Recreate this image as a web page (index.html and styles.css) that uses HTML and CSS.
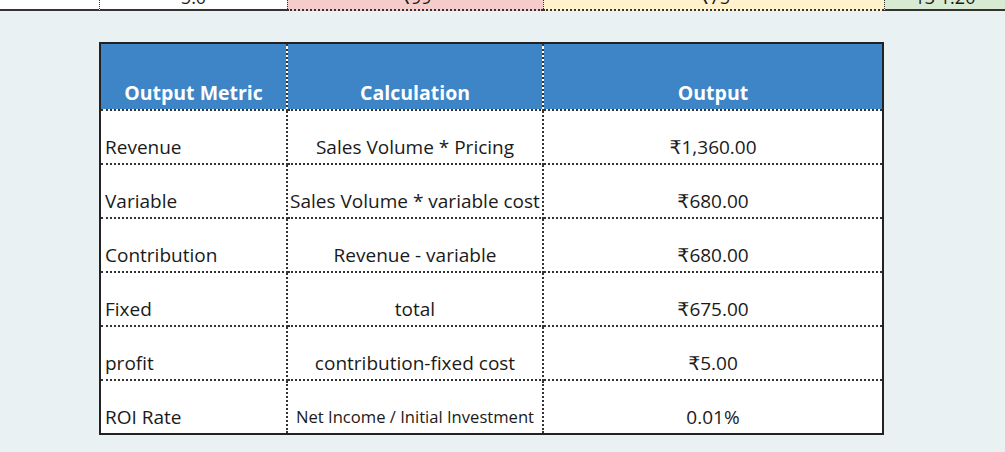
FILE: index.html
```html
<!DOCTYPE html>
<html>
<head>
<meta charset="utf-8">
<link rel="stylesheet" href="styles.css">
</head>
<body>
<div class="strip">
  <div class="s s-a"></div>
  <div class="s s-b"><span>5.0</span></div>
  <div class="s s-c"><span>₹99</span></div>
  <div class="s s-d"><span>₹75</span></div>
  <div class="s s-e"><span>13 1.20</span></div>
</div>
<div class="wrap">
<table class="metrics">
  <thead>
    <tr><th class="c1">Output Metric</th><th class="c2">Calculation</th><th class="c3">Output</th></tr>
  </thead>
  <tbody>
    <tr><td class="c1">Revenue</td><td class="c2">Sales Volume * Pricing</td><td class="c3">₹1,360.00</td></tr>
    <tr><td class="c1">Variable</td><td class="c2">Sales Volume * variable cost</td><td class="c3">₹680.00</td></tr>
    <tr><td class="c1">Contribution</td><td class="c2">Revenue - variable</td><td class="c3">₹680.00</td></tr>
    <tr><td class="c1">Fixed</td><td class="c2">total</td><td class="c3">₹675.00</td></tr>
    <tr><td class="c1">profit</td><td class="c2">contribution-fixed cost</td><td class="c3">₹5.00</td></tr>
    <tr><td class="c1">ROI Rate</td><td class="c2 small">Net Income / Initial Investment</td><td class="c3">0.01%</td></tr>
  </tbody>
</table>
</div>
</body>
</html>
```
FILE: styles.css
```css
html, body {
  margin: 0;
  padding: 0;
  background: #e9f1f3;
  font-family: "Open Sans", "DejaVu Sans", sans-serif;
  color: #1a1a1a;
}
.strip {
  display: flex;
  height: 11px;
  overflow: hidden;
}
.s {
  height: 9px;
  overflow: hidden;
  font-size: 18px;
  text-align: center;
  line-height: 10px;
}
.s span { position: relative; top: -8px; }
.s-a { width: 99px; background: #fff; border-bottom: 2px solid #333; border-right: 1px dotted #333; }
.s-b { width: 187px; background: #fff; border-bottom: 2px solid #333; }
.s-c { width: 255px; background: #f4cccc; border-bottom: 2px dotted #333; border-left: 1px dotted #333; }
.s-d { width: 340px; background: #fff2cc; border-bottom: 2px dotted #333; border-left: 1px dotted #333; }
.s-e { flex: 1; background: #d9ead3; border-bottom: 2px solid #333; border-left: 1px dotted #333; }
.wrap {
  padding: 31px 0 0 99px;
}
.metrics {
  border-collapse: collapse;
  border: 2px solid #222;
  background: #fff;
  table-layout: fixed;
  width: 785px;
}
.metrics th, .metrics td {
  border: 2px dotted #333;
  vertical-align: bottom;
  padding: 0 4px 4px;
  white-space: nowrap;
  overflow: hidden;
}
.metrics th {
  background: #3d85c6;
  color: #fff;
  font-weight: 700;
  font-size: 19.5px;
  height: 62px;
  padding-bottom: 3px;
  text-align: center;
  border-top: none;
}
.metrics td {
  height: 48px;
  font-size: 19px;
  padding-bottom: 4px;
  line-height: 24px;
}
.c1 { width: 177px; text-align: left; }
.c2 { width: 246px; text-align: center; }
.c3 { text-align: center; }
.metrics th.c1 { text-align: center; }
.metrics td.c1 { padding-left: 4px; }
.metrics td.c2 { padding-left: 0; padding-right: 0; }
.metrics td.small { font-size: 16.6px; }
```
